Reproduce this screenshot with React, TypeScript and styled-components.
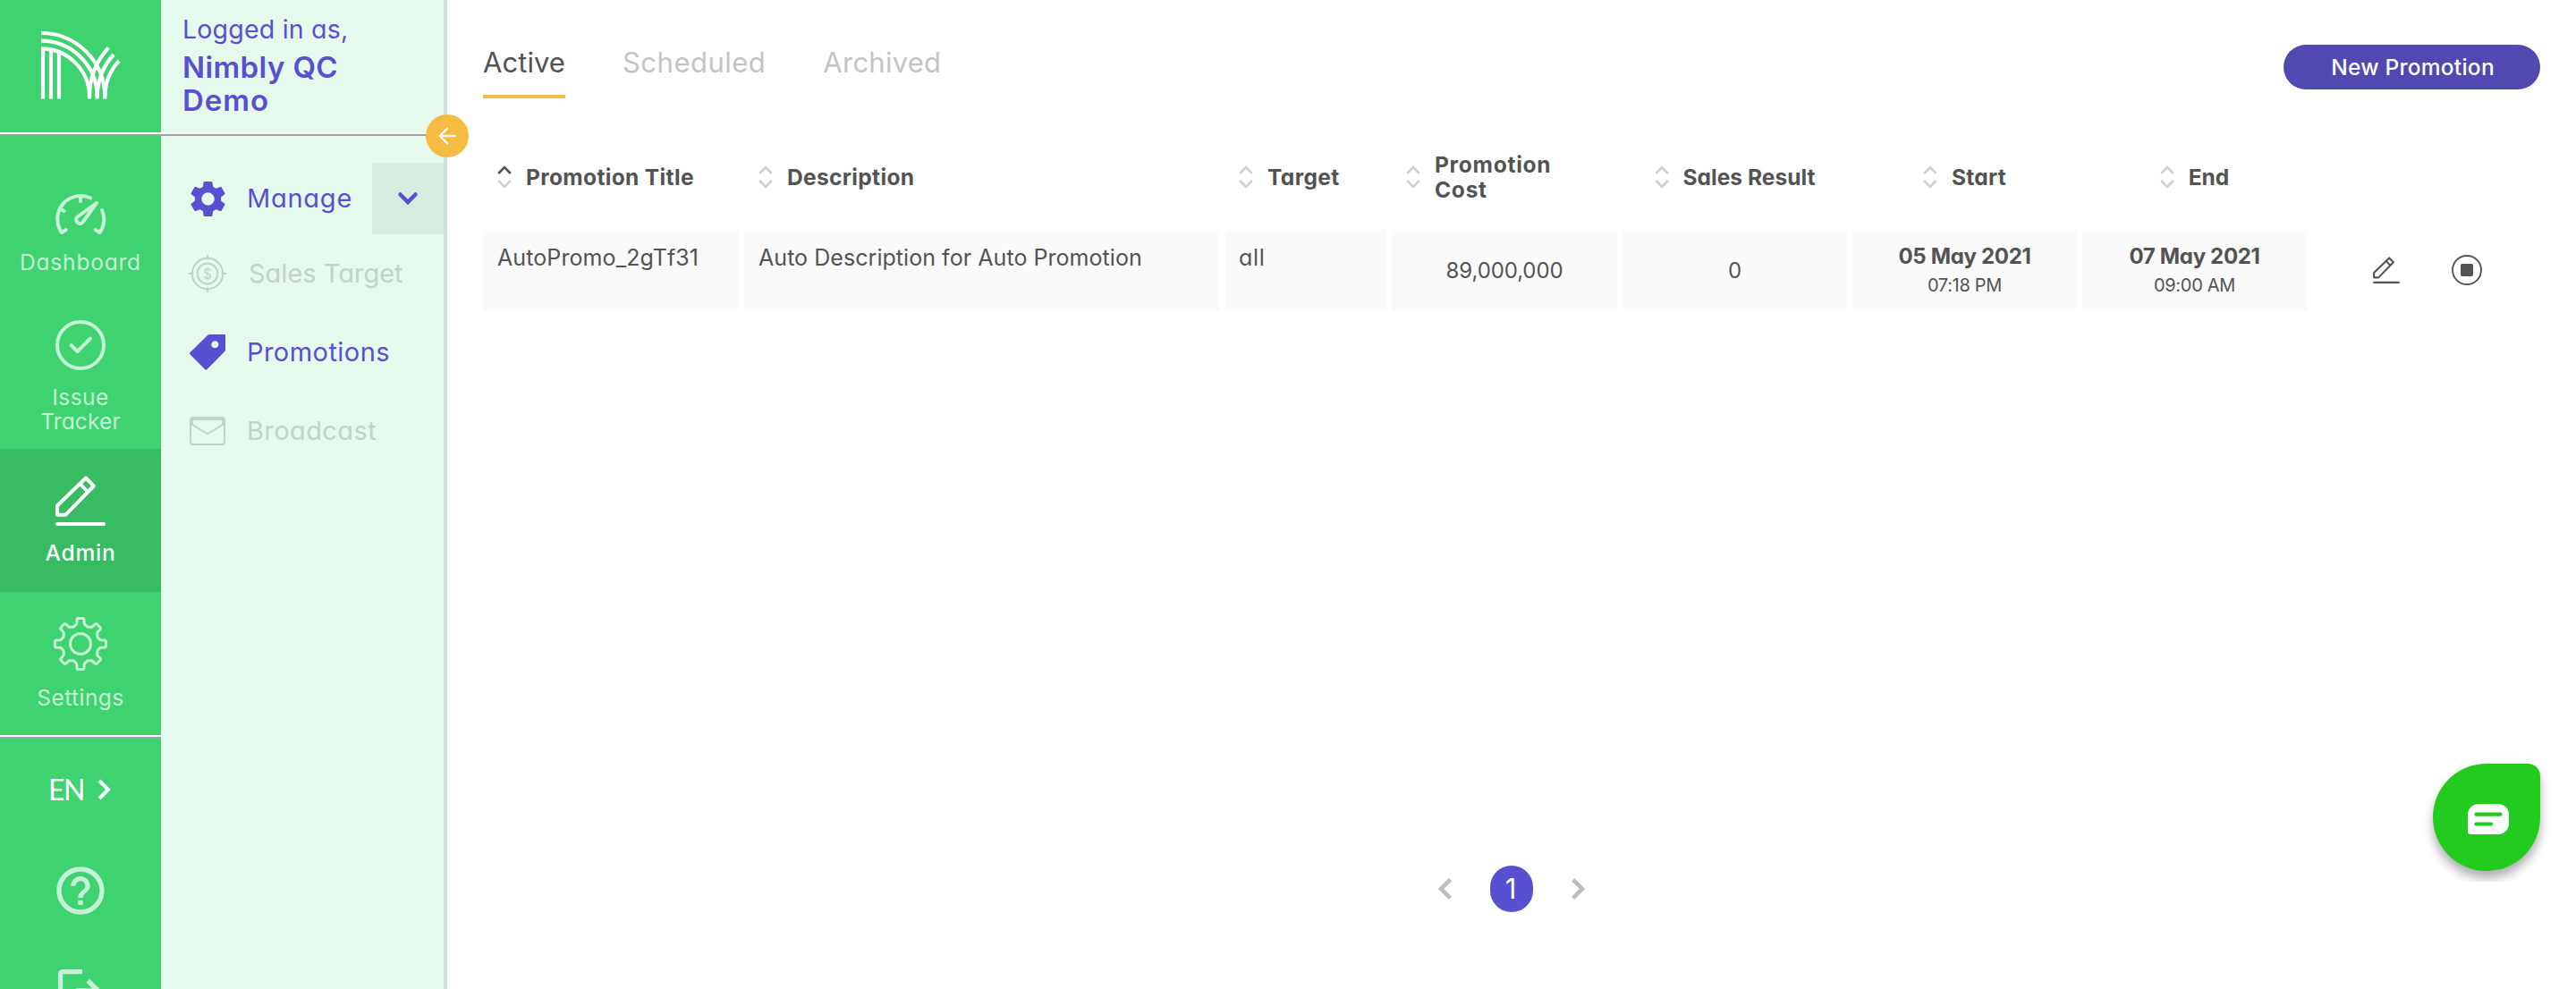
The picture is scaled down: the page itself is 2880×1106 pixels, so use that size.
import React from 'react';
import styled, { createGlobalStyle, css } from 'styled-components';

const color = {
  green: '#3fd270',
  greenActive: '#37bb63',
  mint: '#e6f9ed',
  mintDark: '#d5eedf',
  mintBorder: '#d0e1d6',
  purple: '#5850d0',
  button: '#5149b0',
  amber: '#f6bb43',
  text: '#535353',
  muted: '#c4c4c4',
  disabled: '#c3d2c9',
  pale: 'rgba(255, 255, 255, 0.7)',
};

const GlobalStyle = createGlobalStyle`
  *, *::before, *::after { box-sizing: border-box; }
  body {
    margin: 0;
    background: #fff;
    color: ${color.text};
    font-family: Inter, 'Open Sans', sans-serif;
    font-feature-settings: 'cv11';
  }
  svg { display: block; flex: none; }
`;

const Page = styled.div`
  display: flex;
  height: 1106px;
  overflow: hidden;
  position: relative;
`;

/* ---------- primary rail ---------- */

const Rail = styled.nav`
  flex: none;
  width: 180px;
  height: 1106px;
  overflow: hidden;
  display: flex;
  flex-direction: column;
  background: ${color.green};
`;

const Divider = styled.div`
  flex: none;
  height: 4px;
  background: #9fa1a3;
  border-top: 2px solid #fff;
`;

const LogoBox = styled.div`
  flex: none;
  height: 148px;
  padding: 34px 0 0 45px;
`;

const RailItem = styled.a<{ $height: number; $top: number; $gap: number; $active?: boolean }>`
  flex: none;
  display: flex;
  flex-direction: column;
  align-items: center;
  height: ${(p) => p.$height}px;
  padding-top: ${(p) => p.$top}px;
  gap: ${(p) => p.$gap}px;
  color: ${(p) => (p.$active ? '#fff' : color.pale)};
  background: ${(p) => (p.$active ? color.greenActive : 'transparent')};
`;

const RailLabel = styled.span<{ $spacing: number; $bold?: boolean }>`
  width: 150px;
  text-align: center;
  font-size: 24.5px;
  line-height: 27px;
  font-weight: ${(p) => (p.$bold ? 500 : 400)};
  letter-spacing: ${(p) => p.$spacing}px;
`;

const LabelLine = styled.span<{ $spacing: number }>`
  display: block;
  letter-spacing: ${(p) => p.$spacing}px;
`;

const Language = styled.div`
  flex: none;
  display: flex;
  align-items: center;
  gap: 15px;
  height: 113px;
  padding-left: 54px;
  color: #fff;
  font-family: Lato, sans-serif;
  font-size: 32px;
  letter-spacing: -1.5px;
`;

const RailIcon = styled.div<{ $height: number; $top: number }>`
  flex: none;
  display: flex;
  justify-content: center;
  height: ${(p) => p.$height}px;
  padding-top: ${(p) => p.$top}px;
  color: ${color.pale};
`;

/* ---------- secondary panel ---------- */

const Panel = styled.aside`
  flex: none;
  position: relative;
  width: 320px;
  background: ${color.mint};
  border-right: 4px solid ${color.mintBorder};
  color: ${color.purple};
`;

const Account = styled.div`
  height: 148px;
  padding: 14px 0 0 24px;
`;

const Greeting = styled.div`
  margin-bottom: 5px;
  font-size: 28.5px;
  line-height: 38px;
  letter-spacing: 0.2px;
`;

const CompanyLine = styled.div<{ $spacing: number }>`
  font-size: 33px;
  line-height: 37px;
  font-weight: 600;
  letter-spacing: ${(p) => p.$spacing}px;
`;

const CollapseButton = styled.button`
  position: absolute;
  top: 128px;
  right: -28px;
  z-index: 2;
  display: flex;
  align-items: center;
  justify-content: center;
  width: 48px;
  height: 48px;
  padding: 0;
  border: 0;
  border-radius: 50%;
  background: ${color.amber};
`;

const Menu = styled.div`
  padding-top: 30px;
`;

const MenuItem = styled.div<{ $disabled?: boolean; $height?: number }>`
  display: flex;
  align-items: center;
  height: ${(p) => p.$height ?? 88}px;
  padding-left: 32px;
  color: ${(p) => (p.$disabled ? color.disabled : color.purple)};
`;

const MenuIcon = styled.div`
  display: flex;
  justify-content: center;
  width: 40px;
  margin-right: 23px;
`;

const MenuLabel = styled.span<{ $spacing: number; $nudge?: number }>`
  padding-left: ${(p) => p.$nudge ?? 0}px;
  font-size: 29px;
  line-height: 40px;
  letter-spacing: ${(p) => p.$spacing}px;
  white-space: nowrap;
`;

const Expander = styled.div`
  display: flex;
  align-items: center;
  justify-content: center;
  width: 80px;
  height: 80px;
  margin-left: auto;
  background: ${color.mintDark};
`;

/* ---------- content ---------- */

const Main = styled.main`
  flex: 1;
  min-width: 0;
  display: flex;
  flex-direction: column;
  padding: 50px 40px 86px;
`;

const TopBar = styled.div`
  display: flex;
  justify-content: space-between;
  align-items: flex-start;
`;

const Tabs = styled.div`
  display: flex;
  gap: 64px;
`;

const Tab = styled.div<{ $spacing: number; $active?: boolean }>`
  height: 60px;
  font-size: 31px;
  line-height: 40px;
  letter-spacing: ${(p) => p.$spacing}px;
  color: ${color.muted};
  ${(p) =>
    p.$active &&
    css`
      color: ${color.text};
      border-bottom: 4px solid ${color.amber};
    `}
`;

const PrimaryButton = styled.button`
  width: 287px;
  height: 50px;
  padding: 0 0 0 2px;
  border: 0;
  border-radius: 25px;
  background: ${color.button};
  color: #fff;
  font: 500 24.5px/50px Inter, sans-serif;
  letter-spacing: 0.25px;
`;

const Grid = styled.div`
  display: grid;
  grid-template-columns: 286px 531px 181px 252px 251px 251px 251px 1fr;
  grid-template-rows: 118px 90px;
  column-gap: 6px;
  margin-top: 29px;
`;

const HeadCell = styled.div<{ $center?: boolean; $spacing: number }>`
  display: flex;
  align-items: center;
  justify-content: ${(p) => (p.$center ? 'center' : 'flex-start')};
  gap: 16px;
  padding: 0 ${(p) => (p.$center ? 0 : 16)}px;
  font-size: 24.5px;
  line-height: 28px;
  font-weight: 700;
  letter-spacing: ${(p) => p.$spacing}px;
`;

const HeadText = styled.span<{ $width?: number }>`
  width: ${(p) => (p.$width ? `${p.$width}px` : 'auto')};
`;

const Cell = styled.div<{ $center?: boolean; $spacing: number; $size?: number }>`
  background: #fafafa;
  font-size: ${(p) => p.$size ?? 24}px;
  line-height: 36px;
  letter-spacing: ${(p) => p.$spacing}px;
  ${(p) =>
    p.$center
      ? css`
          display: flex;
          flex-direction: column;
          align-items: center;
          justify-content: center;
          padding-top: 1px;
        `
      : css`
          padding: 13px 16px 0;
        `}
`;

const DateText = styled.div`
  font-weight: 700;
  line-height: 34px;
  letter-spacing: -0.33px;
`;

const TimeText = styled.div`
  font-size: 20px;
  line-height: 31px;
  letter-spacing: -0.3px;
`;

const Actions = styled.div`
  display: flex;
  align-items: center;
  gap: 57px;
  padding-left: 67px;
`;

const Pager = styled.div`
  display: flex;
  align-items: center;
  justify-content: center;
  gap: 43px;
  margin-top: auto;
  color: #bdbdbd;
`;

const CurrentPage = styled.div`
  width: 48px;
  height: 52px;
  padding-right: 2px;
  border-radius: 24px;
  background: ${color.purple};
  color: #fff;
  font-size: 31px;
  line-height: 52px;
  text-align: center;
`;

const ChatArea = styled.div`
  position: absolute;
  right: 20px;
  top: 834px;
  width: 160px;
  height: 152px;
  padding: 20px;
  overflow: hidden;
`;

const ChatBubble = styled.div`
  width: 120px;
  height: 120px;
  padding: 45px 0 0 39px;
  border-radius: 60px 14px 60px 60px;
  background: #22cb1e;
  box-shadow: 0 8px 12px rgba(0, 0, 0, 0.32);
`;

/* ---------- icons ---------- */

const Logo = () => (
  <svg width="92" height="80" viewBox="15 14 92 80" fill="none" stroke="#fff" strokeWidth="4.2">
    <path d="M18 34.3V90.5M27 36V90.5M36 38V90.5" />
    <path d="M16 34.3A54 54 0 0 1 70 88.3V90.5M16 25.7A62.7 62.7 0 0 1 78.7 88.4V90.5M16 17A71.3 71.3 0 0 1 87.3 88.3V90.5" />
    <path d="M70 88.3A80.7 80.7 0 0 1 91.3 33.4M78.7 88.4A71.4 71.4 0 0 1 97 41M87.3 88.3A59.6 59.6 0 0 1 103 48.2" />
  </svg>
);

const GaugeIcon = () => (
  <svg width="60" height="60" viewBox="0 0 60 60" fill="none" stroke="currentColor" strokeWidth="4" strokeLinecap="round" strokeLinejoin="round">
    <path d="M51.5 50A26 26 0 0 0 54 25M9 50A26 26 0 0 1 41 11.3M9 50l4.6-2.8M51.5 50l-4.8-2.8M30 9.5v5.5M7 23.5l4.5 2.5M48 17L26.5 32.5a4.3 4.3 0 1 0 6.8 5Z" />
  </svg>
);

const CheckIcon = () => (
  <svg width="60" height="60" viewBox="0 0 60 60" fill="none" stroke="currentColor" strokeWidth="4" strokeLinecap="round" strokeLinejoin="round">
    <circle cx="30" cy="30" r="26" />
    <path d="M19.5 30L26.5 37L41 22.5" />
  </svg>
);

const PencilIcon = ({ size }: { size: number }) => (
  <svg width={size} height={size} viewBox="0 0 60 60" fill="none" stroke="currentColor" strokeWidth="4" strokeLinecap="round" strokeLinejoin="round">
    <path d="M4 45.7V35.5L36 4.5l8.7 9L13.5 45.7ZM29.5 11l8.5 9M4 56H56" />
  </svg>
);

const gearOutline = (() => {
  const points: string[] = [];
  const at = (deg: number, r: number) => {
    const a = (deg * Math.PI) / 180;
    return `${(30 + r * Math.sin(a)).toFixed(2)} ${(30 - r * Math.cos(a)).toFixed(2)}`;
  };
  for (let tooth = 0; tooth < 360; tooth += 45) {
    points.push(at(tooth - 15, 21.6), at(tooth - 11, 22.6), at(tooth - 8, 28), at(tooth - 6, 28.7));
    points.push(at(tooth + 6, 28.7), at(tooth + 8, 28), at(tooth + 11, 22.6), at(tooth + 15, 21.6));
    points.push(at(tooth + 22.5, 20.4));
  }
  return `M${points.join('L')}Z`;
})();

const GearOutlineIcon = () => (
  <svg width="60" height="60" viewBox="0 0 60 60" fill="none" stroke="currentColor" strokeWidth="3" strokeLinejoin="round">
    <path d={gearOutline} />
    <circle cx="30" cy="30" r="11.5" />
  </svg>
);

const HelpIcon = () => (
  <svg width="64" height="64" viewBox="0 0 24 24" fill="currentColor">
    <path d="M11 18h2v-2h-2v2zm1-16C6.48 2 2 6.48 2 12s4.48 10 10 10 10-4.48 10-10S17.52 2 12 2zm0 18c-4.41 0-8-3.59-8-8s3.59-8 8-8 8 3.59 8 8-3.59 8-8 8zm0-14c-2.21 0-4 1.79-4 4h2c0-1.1.9-2 2-2s2 .9 2 2c0 2-3 1.75-3 5h2c0-2.25 3-2.5 3-5 0-2.21-1.79-4-4-4z" />
  </svg>
);

const LogoutIcon = () => (
  <svg width="64" height="64" viewBox="0 0 24 24" fill="currentColor">
    <path d="M15.8 7l-1.41 1.41L16.97 11H10.1v2h6.87l-2.58 2.58L15.8 17l5-5zM4.6 5h8.1V3H4.6c-1.1 0-2 .9-2 2v14c0 1.1.9 2 2 2h8.1v-2H4.6z" />
  </svg>
);

const GearIcon = () => (
  <svg width="47" height="47" viewBox="0 0 24 24" fill="currentColor">
    <path d="M19.43 12.98c.04-.32.07-.64.07-.98s-.03-.66-.07-.98l2.11-1.65c.19-.15.24-.42.12-.64l-2-3.46c-.12-.22-.39-.3-.61-.22l-2.49 1c-.52-.4-1.08-.73-1.69-.98l-.38-2.65C14.46 2.18 14.25 2 14 2h-4c-.25 0-.46.18-.49.42l-.38 2.65c-.61.25-1.17.59-1.69.98l-2.49-1c-.23-.09-.49 0-.61.22l-2 3.46c-.13.22-.07.49.12.64l2.11 1.65c-.04.32-.07.65-.07.98s.03.66.07.98l-2.11 1.65c-.19.15-.24.42-.12.64l2 3.46c.12.22.39.3.61.22l2.49-1c.52.4 1.08.73 1.69.98l.38 2.65c.03.24.24.42.49.42h4c.25 0 .46-.18.49-.42l.38-2.65c.61-.25 1.17-.59 1.69-.98l2.49 1c.23.09.49 0 .61-.22l2-3.46c.12-.22.07-.49-.12-.64l-2.11-1.65zM12 15.7a3.7 3.7 0 1 1 0-7.4 3.7 3.7 0 0 1 0 7.4z" />
  </svg>
);

const DollarTargetIcon = () => (
  <svg width="42" height="42" viewBox="0 0 42 42" fill="none" stroke="currentColor" strokeWidth="2">
    <circle cx="21" cy="21" r="17.2" />
    <circle cx="21" cy="21" r="11.4" />
    <path d="M21 0V5.5M21 36.5V42M0 21H5.5M36.5 21H42" />
    <text x="21" y="26.5" textAnchor="middle" fontSize="15.5" fontFamily="Inter, sans-serif" fill="currentColor" stroke="none">
      $
    </text>
  </svg>
);

const TagIcon = () => (
  <svg width="40" height="40" viewBox="0 0 40 40" fill="currentColor" fillRule="evenodd">
    <path d="M.4 20.3L20 1.1Q21.1 0 22.7 0H39Q40 0 40 1V17Q40 18.2 39.2 19L19.3 39.3Q18.3 40.2 17.3 39.3L.4 22.3Q-.4 21.3 .4 20.3ZM28.3 7.3a4 4 0 1 0 .01 0Z" />
  </svg>
);

const EnvelopeIcon = () => (
  <svg width="40" height="32" viewBox="0 0 40 32" fill="none" stroke="currentColor" strokeWidth="2">
    <rect x="1" y="1" width="38" height="30" rx="3" />
    <path d="M2 2.5H38M2.4 2V8.5M37.6 2V8.5" strokeWidth="3" />
    <path d="M2.5 8.5L20 19.3L37.5 8.5" />
  </svg>
);

const SortIcon = ({ ascending }: { ascending?: boolean }) => (
  <svg width="16" height="26" viewBox="0 0 16 26" fill="none" strokeWidth="2.6">
    <path d="M1.2 9L8 2l6.8 7" stroke={ascending ? color.text : '#cfcfcf'} />
    <path d="M1.2 17L8 24l6.8-7" stroke="#cfcfcf" />
  </svg>
);

const StopIcon = () => (
  <svg width="34" height="34" viewBox="0 0 34 34">
    <circle cx="17" cy="17" r="16" fill="none" stroke={color.text} strokeWidth="1.9" />
    <rect x="10" y="10" width="14" height="14" rx="2" fill={color.text} />
  </svg>
);

const PageArrow = ({ next }: { next?: boolean }) => (
  <svg width="15" height="24" viewBox="0 0 15 24" fill="none" stroke="currentColor" strokeWidth="4.6">
    <path d={next ? 'M1.6 1.6L12 12L1.6 22.4' : 'M13.4 1.6L3 12L13.4 22.4'} />
  </svg>
);

/* ---------- data ---------- */

const headers = [
  { label: 'Promotion Title', spacing: 0.35, ascending: true },
  { label: 'Description', spacing: 0.35 },
  { label: 'Target', spacing: 0.4 },
  { label: 'Promotion Cost', spacing: 0.75, width: 140 },
  { label: 'Sales Result', spacing: 0.03, center: true },
  { label: 'Start', spacing: 0.3, center: true },
  { label: 'End', spacing: 0, center: true },
];

export default function App() {
  return (
    <Page>
      <GlobalStyle />
      <Rail>
        <LogoBox>
          <Logo />
        </LogoBox>
        <Divider />
        <RailItem $height={174} $top={58} $gap={10}>
          <GaugeIcon />
          <RailLabel $spacing={0.8}>Dashboard</RailLabel>
        </RailItem>
        <RailItem $height={176} $top={30} $gap={15}>
          <CheckIcon />
          <RailLabel $spacing={0}>
            <LabelLine $spacing={0.5}>Issue</LabelLine>
            <LabelLine $spacing={0.15}>Tracker</LabelLine>
          </RailLabel>
        </RailItem>
        <RailItem $height={160} $top={28} $gap={15} $active>
          <PencilIcon size={60} />
          <RailLabel $spacing={0.8} $bold>
            Admin
          </RailLabel>
        </RailItem>
        <RailItem $height={160} $top={28} $gap={17}>
          <GearOutlineIcon />
          <RailLabel $spacing={0.45}>Settings</RailLabel>
        </RailItem>
        <Divider />
        <Language>
          EN
          <svg width="15" height="24" viewBox="0 0 15 24" fill="none" stroke="currentColor" strokeWidth="4">
            <path d="M2 2L12 12L2 22" />
          </svg>
        </Language>
        <RailIcon $height={115} $top={25}>
          <HelpIcon />
        </RailIcon>
        <RailIcon $height={108} $top={22}>
          <LogoutIcon />
        </RailIcon>
      </Rail>

      <Panel>
        <Account>
          <Greeting>Logged in as,</Greeting>
          <CompanyLine $spacing={0.4}>Nimbly QC</CompanyLine>
          <CompanyLine $spacing={1}>Demo</CompanyLine>
        </Account>
        <Divider />
        <CollapseButton aria-label="Collapse menu">
          <svg width="20" height="20" viewBox="0 0 20 20" fill="none" stroke="#fff" strokeWidth="2.3" strokeLinecap="round" strokeLinejoin="round">
            <path d="M18.5 10H2M10 1.7L1.7 10L10 18.3" />
          </svg>
        </CollapseButton>
        <Menu>
          <MenuItem $height={80}>
            <MenuIcon>
              <GearIcon />
            </MenuIcon>
            <MenuLabel $spacing={0.75} $nudge={1}>
              Manage
            </MenuLabel>
            <Expander>
              <svg width="24" height="16" viewBox="0 0 24 16" fill="none" stroke="currentColor" strokeWidth="4.5" strokeLinecap="round">
                <path d="M3.5 3.5L12 12L20.5 3.5" />
              </svg>
            </Expander>
          </MenuItem>
          <MenuItem $disabled>
            <MenuIcon>
              <DollarTargetIcon />
            </MenuIcon>
            <MenuLabel $spacing={0} $nudge={3}>
              Sales Target
            </MenuLabel>
          </MenuItem>
          <MenuItem>
            <MenuIcon>
              <TagIcon />
            </MenuIcon>
            <MenuLabel $spacing={0.45} $nudge={1}>
              Promotions
            </MenuLabel>
          </MenuItem>
          <MenuItem $disabled>
            <MenuIcon>
              <EnvelopeIcon />
            </MenuIcon>
            <MenuLabel $spacing={0.4} $nudge={1}>
              Broadcast
            </MenuLabel>
          </MenuItem>
        </Menu>
      </Panel>

      <Main>
        <TopBar>
          <Tabs>
            <Tab $spacing={0.05} $active>
              Active
            </Tab>
            <Tab $spacing={0.5}>Scheduled</Tab>
            <Tab $spacing={0.25}>Archived</Tab>
          </Tabs>
          <PrimaryButton>New Promotion</PrimaryButton>
        </TopBar>

        <Grid>
          {headers.map((h) => (
            <HeadCell key={h.label} $spacing={h.spacing} $center={h.center}>
              <SortIcon ascending={h.ascending} />
              <HeadText $width={h.width}>{h.label}</HeadText>
            </HeadCell>
          ))}
          <div />
          <Cell $spacing={0.1} $size={25}>
            AutoPromo_2gTf31
          </Cell>
          <Cell $spacing={0.05} $size={25}>
            Auto Description for Auto Promotion
          </Cell>
          <Cell $spacing={0.7} $size={25}>
            all
          </Cell>
          <Cell $spacing={-0.1} $center>
            89,000,000
          </Cell>
          <Cell $spacing={0} $center>
            0
          </Cell>
          <Cell $spacing={0} $center>
            <DateText>05 May 2021</DateText>
            <TimeText>07:18 PM</TimeText>
          </Cell>
          <Cell $spacing={0} $center>
            <DateText>07 May 2021</DateText>
            <TimeText>09:00 AM</TimeText>
          </Cell>
          <Actions>
            <PencilIcon size={32} />
            <StopIcon />
          </Actions>
        </Grid>

        <Pager>
          <PageArrow />
          <CurrentPage>1</CurrentPage>
          <PageArrow next />
        </Pager>
      </Main>

      <ChatArea>
        <ChatBubble>
          <svg width="46" height="34" viewBox="0 0 46 34" fill="none">
            <path d="M12 0H34A12 12 0 0 1 46 12V22A12 12 0 0 1 34 34H3Q0 34 0 31V12A12 12 0 0 1 12 0Z" fill="#fff" />
            <path d="M9.5 11.7H36.5M9.5 22.5H26" stroke="#22cb1e" strokeWidth="4.2" strokeLinecap="round" />
          </svg>
        </ChatBubble>
      </ChatArea>
    </Page>
  );
}
